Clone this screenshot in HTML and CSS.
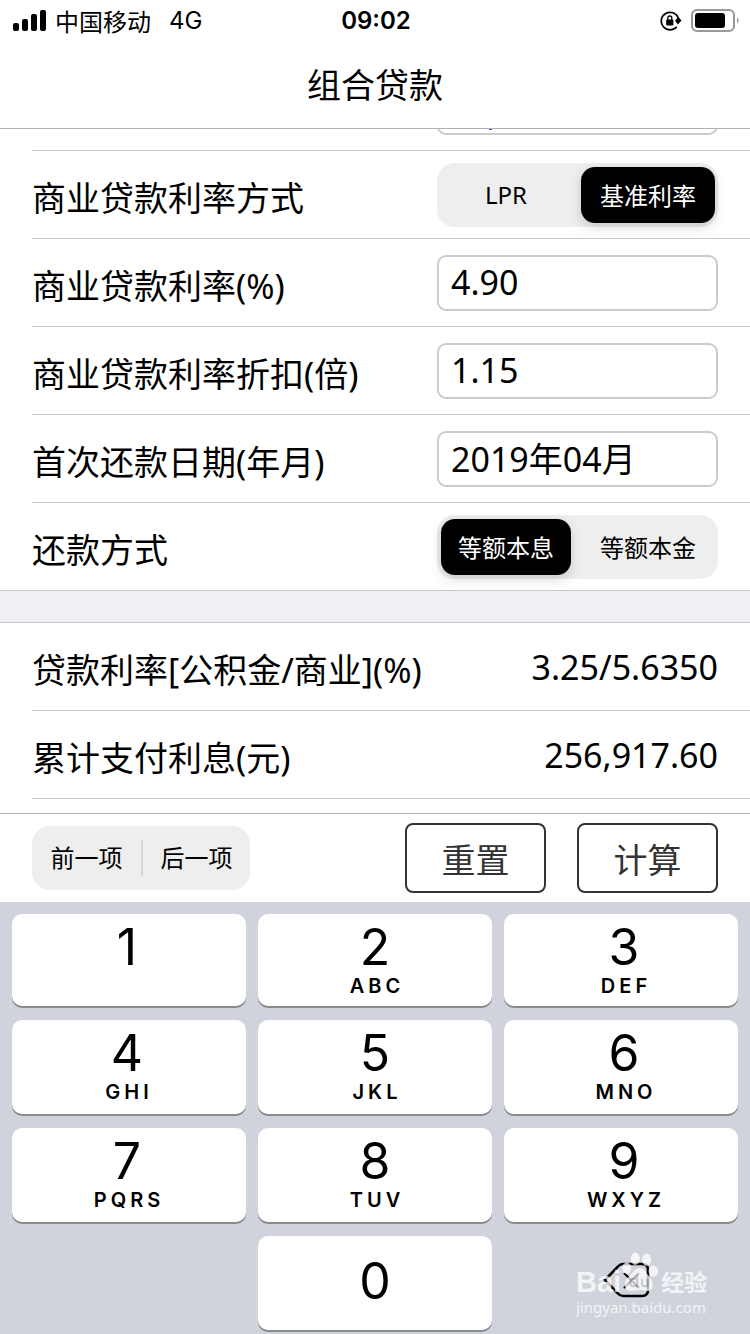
FILE: index.html
```html
<!DOCTYPE html>
<html lang="zh-CN">
<head>
<meta charset="utf-8">
<meta name="viewport" content="width=device-width, initial-scale=1">
<title>组合贷款</title>
<link rel="stylesheet" href="styles.css">
</head>
<body>
<header class="header">
  <div class="status">
    <div class="status-left">
      <svg class="signal" width="34" height="22" viewBox="0 0 34 22" aria-hidden="true">
        <rect x="0" y="13" width="6" height="8" rx="2"/><rect x="9" y="9" width="6" height="12" rx="2"/><rect x="18" y="4" width="6" height="17" rx="2"/><rect x="27" y="0" width="6" height="21" rx="2"/>
      </svg>
      <span class="carrier">中国移动</span>
      <span class="network">4G</span>
    </div>
    <time class="clock">09:02</time>
    <div class="status-right">
      <svg width="22" height="20" viewBox="0 0 22 20" aria-hidden="true">
        <path d="M18.300 7A8.800 8.800 0 1 0 16.800 15.800" fill="none" stroke="#000" stroke-width="1.700"/>
        <path d="M15 9.500 18.500 6 21.500 9.500 17.800 13.500z"/>
        <rect x="6.200" y="8.600" width="7.200" height="6" rx=".8"/>
        <path d="M7.800 9V7a2 2 0 0 1 4 0V9" fill="none" stroke="#000" stroke-width="1.300"/>
      </svg>
      <svg width="48" height="24" viewBox="0 0 48 24" aria-hidden="true">
        <rect x="1" y="1" width="42" height="21" rx="5" fill="none" stroke="#999" stroke-width="2"/>
        <rect x="4" y="4" width="30" height="15" rx="3"/>
        <path d="M46 8.500c2 1 2 5 0 6z" fill="#999"/>
      </svg>
    </div>
  </div>
  <h1 class="title">组合贷款</h1>
</header>

<main class="content">
  <form class="rows">
    <div class="row">
      <span></span>
      <div class="field-wrap"><input class="field" type="text" aria-label="贷款金额"><span class="caret"></span></div>
    </div>
    <div class="row">
      <span class="label" id="rate-mode">商业贷款利率方式</span>
      <div class="segment" role="group" aria-labelledby="rate-mode">
        <button type="button" class="option" aria-pressed="false">LPR</button>
        <button type="button" class="option active" aria-pressed="true">基准利率</button>
      </div>
    </div>
    <div class="row">
      <label class="label" for="rate">商业贷款利率(%)</label>
      <input class="field" id="rate" type="text" value="4.90">
    </div>
    <div class="row">
      <label class="label" for="discount">商业贷款利率折扣(倍)</label>
      <input class="field" id="discount" type="text" value="1.15">
    </div>
    <div class="row">
      <label class="label" for="first-date">首次还款日期(年月)</label>
      <input class="field" id="first-date" type="text" value="2019年04月">
    </div>
    <div class="row last">
      <span class="label" id="repay-mode">还款方式</span>
      <div class="segment" role="group" aria-labelledby="repay-mode">
        <button type="button" class="option active" aria-pressed="true">等额本息</button>
        <button type="button" class="option" aria-pressed="false">等额本金</button>
      </div>
    </div>
  </form>
  <div class="divider"></div>
  <section class="results">
    <div class="row"><span class="label">贷款利率[公积金/商业](%)</span><output class="value">3.25/5.6350</output></div>
    <div class="row"><span class="label">累计支付利息(元)</span><output class="value">256,917.60</output></div>
  </section>
</main>

<div class="toolbar">
  <div class="stepper">
    <button type="button" class="step">前一项</button>
    <button type="button" class="step">后一项</button>
  </div>
  <div class="actions">
    <button type="button" class="action">重置</button>
    <button type="button" class="action">计算</button>
  </div>
</div>

<div class="keyboard">
  <button type="button" class="key"><span class="digit">1</span></button>
  <button type="button" class="key"><span class="digit">2</span><span class="letters">ABC</span></button>
  <button type="button" class="key"><span class="digit">3</span><span class="letters">DEF</span></button>
  <button type="button" class="key"><span class="digit">4</span><span class="letters">GHI</span></button>
  <button type="button" class="key"><span class="digit">5</span><span class="letters">JKL</span></button>
  <button type="button" class="key"><span class="digit">6</span><span class="letters">MNO</span></button>
  <button type="button" class="key"><span class="digit">7</span><span class="letters">PQRS</span></button>
  <button type="button" class="key"><span class="digit">8</span><span class="letters">TUV</span></button>
  <button type="button" class="key"><span class="digit">9</span><span class="letters">WXYZ</span></button>
  <button type="button" class="key zero"><span class="digit">0</span></button>
  <button type="button" class="backspace" aria-label="删除">
    <svg width="48" height="36" viewBox="0 0 48 36" aria-hidden="true">
      <path d="M2 18 15 4.500Q17 2 20 2H39Q45 2 45 8V28Q45 34 39 34H20Q17 34 15 31.500Z" fill="none" stroke="#000" stroke-width="2.600"/>
      <path d="M21 11 36 26M36 11 21 26" stroke="#000" stroke-width="2.200"/>
    </svg>
  </button>
  <div class="watermark">
    <div class="brand">
      <span class="brand-bai">Bai</span>
      <svg class="paw" width="38" height="42" viewBox="0 0 40 44" aria-hidden="true">
        <ellipse cx="6" cy="17" rx="4.500" ry="6"/><ellipse cx="15" cy="7" rx="4.800" ry="6.500"/><ellipse cx="27" cy="8" rx="4.800" ry="6.500"/><ellipse cx="34" cy="20" rx="5" ry="6"/>
        <path d="M20 17c5 0 6 5 10 9 5 5 5 15-3 15-4 0-4-1-7-1s-5 1-9 1C3 41 2 32 7 27c5-4 7-10 13-10z"/>
        <path d="M17 24v12h-4q-3 0-3-4t3-4h4M22 28v5q0 3 3 3h3v-8" fill="none" stroke="#c3c6cd" stroke-width="2"/>
      </svg>
      <span class="brand-name">经验</span>
    </div>
    <span class="site">jingyan.baidu.com</span>
  </div>
</div>
</body>
</html>
```
FILE: styles.css
```css
* { box-sizing: border-box; }

body {
  margin: 0;
  min-height: 100vh;
  display: flex;
  flex-direction: column;
  background: #fff;
  color: #000;
  font-family: "Noto Sans", "Noto Sans CJK SC", sans-serif;
  font-size: 34px;
}

button, input { font: inherit; color: inherit; margin: 0; }
button { border: 0; padding: 0; background: none; }

.header { border-bottom: 1px solid #b2b2b2; }

.status {
  display: grid;
  grid-template-columns: 1fr auto 1fr;
  align-items: center;
  height: 40px;
  padding: 0 11px 0 13px;
  font-family: Inter, "Noto Sans CJK SC", sans-serif;
  font-size: 24px;
  line-height: 42px;
}
.status-left { display: flex; align-items: center; }
.carrier { margin-left: 8px; font-family: "Noto Sans CJK SC", sans-serif; line-height: 40px; }
.network { margin-left: 18px; }
.clock { font-weight: 600; }
.status-right { display: flex; align-items: center; justify-content: flex-end; gap: 9px; }

.title {
  margin: 0;
  height: 88px;
  font-size: 34px;
  font-weight: 400;
  line-height: 90px;
  text-align: center;
}

.content { flex: 1; overflow: hidden; }
.rows { margin-top: -66px; }

.row {
  display: flex;
  align-items: center;
  justify-content: space-between;
  height: 88px;
  margin-left: 32px;
  padding-right: 32px;
  border-bottom: 1px solid #c8c7cc;
}
.row.last { margin-left: 0; padding-left: 32px; }

.label, .value { line-height: 48px; }
.label { padding-top: 6px; }

.field-wrap { position: relative; }
.caret {
  position: absolute;
  left: 52px;
  top: 10px;
  width: 3px;
  height: 41px;
  background: #2f55e8;
}
.field {
  display: block;
  width: 281px;
  height: 56px;
  padding: 0 12px 2px;
  border: 2px solid #ccc;
  border-radius: 9px;
  background: #fff;
  line-height: 48px;
}

.segment {
  display: grid;
  grid-template-columns: 130fr 134fr;
  gap: 10px;
  width: 281px;
  height: 64px;
  padding: 4px 3px 4px 4px;
  border-radius: 18px;
  background: #eee;
  font-size: 24px;
}
.option { border-radius: 14px; }
.option.active {
  background: #000;
  color: #fff;
  box-shadow: 0 4px 12px rgba(0, 0, 0, .16);
}

.divider {
  height: 32px;
  background: #efeff4;
  border-bottom: 1px solid #c8c7cc;
}

.toolbar {
  display: flex;
  align-items: center;
  justify-content: space-between;
  height: 89px;
  padding: 0 32px;
  border-top: 1px solid #b2b2b2;
}
.stepper {
  display: flex;
  align-items: center;
  height: 64px;
  border-radius: 18px;
  background: #eee;
  font-size: 24px;
}
.step { width: 109px; height: 36px; line-height: 36px; }
.step + .step { border-left: 2px solid #d8d8d8; }
.actions { display: flex; gap: 31px; }
.action {
  width: 141px;
  height: 70px;
  border: 2px solid #333;
  border-radius: 8px;
  color: #333;
}

.keyboard {
  position: relative;
  display: grid;
  grid-template-columns: repeat(3, 1fr);
  grid-template-rows: 92px repeat(3, 94px);
  gap: 14px 12px;
  padding: 12px 12px 4px;
  background: #d0d3db;
  font-family: Inter, sans-serif;
}
.key {
  display: flex;
  flex-direction: column;
  align-items: center;
  justify-content: flex-start;
  padding-top: 8px;
  border-radius: 10px;
  background: #fff;
  box-shadow: 0 2px 0 #898a8d;
}
.key:nth-child(3n + 1) { padding-right: 4px; }
.key:nth-child(3n) { padding-left: 6px; }
.digit { font-size: 50px; line-height: 50px; }
.letters {
  padding-left: 4px;
  font-size: 20px;
  font-weight: 600;
  letter-spacing: 4px;
  line-height: 28px;
}
.key.zero { grid-column: 2; justify-content: center; padding: 0 0 4px; }
.backspace {
  display: flex;
  align-items: center;
  justify-content: center;
  padding: 0 0 6px 12px;
}

.watermark {
  position: absolute;
  right: 40px;
  bottom: 18px;
  width: 134px;
  color: #fff;
  opacity: .75;
  font-family: "Noto Sans", "Noto Sans CJK SC", sans-serif;
}
.brand { display: flex; align-items: flex-end; height: 46px; line-height: 32px; }
.brand-bai { font-family: "Liberation Sans", sans-serif; font-size: 29px; font-weight: 700; }
.paw { flex: none; margin-bottom: 4px; fill: #fff; }
.brand-name { margin-left: 2px; font-size: 23px; font-weight: 700; white-space: nowrap; }
.site { display: block; font-size: 15px; line-height: 18px; }
```
